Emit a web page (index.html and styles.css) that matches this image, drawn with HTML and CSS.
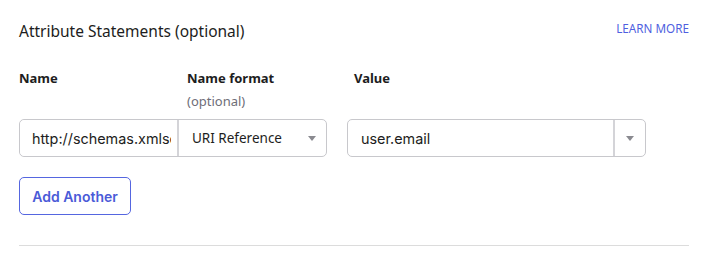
FILE: index.html
```html
<!DOCTYPE html>
<html lang="en">
<head>
  <meta charset="UTF-8">
  <title>Attribute Statements</title>
  <link rel="stylesheet" href="styles.css">
</head>
<body>
  <section class="attr-section">
    <!-- Заголовок секции -->
    <header class="attr-head">
      <h2 class="attr-title">Attribute Statements (optional)</h2>
      <a href="#" class="learn-more">LEARN MORE</a>
    </header>

    <!-- Подписи колонок -->
    <div class="attr-grid">
      <div class="col-label">Name</div>
      <div class="col-label">Name format<span class="col-hint">(optional)</span></div>
      <div class="col-label col-value">Value</div>

      <div class="name-group">
        <input class="name-input" type="text" value="http://schemas.xmlsoap.org/ws/2005/05/identity/claims/emailaddress">
        <div class="select-box">
          <span>URI Reference</span>
          <span class="caret"></span>
        </div>
      </div>

      <div class="value-box">
        <span class="value-text">user.email</span>
        <span class="value-toggle"><span class="caret"></span></span>
      </div>
    </div>

    <button class="add-btn" type="button">Add Another</button>

    <hr class="divider">
  </section>
</body>
</html>
```

FILE: styles.css
```css
/* Базовые сбросы */
* {
  margin: 0;
  padding: 0;
  box-sizing: border-box;
}

body {
  font-family: 'Noto Sans', 'Open Sans', sans-serif;
  color: #1d1d21;
  background: #fff;
  width: 713px;
}

.attr-section {
  padding: 18px 24px 0 19px;
}

/* Заголовок */
.attr-head {
  display: flex;
  justify-content: space-between;
  align-items: flex-start;
  height: 50px;
}

.attr-title {
  font-size: 15.5px;
  font-weight: 400;
  line-height: 26px;
}

.learn-more {
  font-size: 11.7px;
  color: #4f5fe0;
  text-decoration: none;
  line-height: 20px;
}

/* Сетка полей */
.attr-grid {
  display: grid;
  grid-template-columns: 168px 160px 299px;
}

.col-label {
  font-size: 13px;
  font-weight: 700;
  line-height: 20px;
  height: 51px;
}

.col-value {
  padding-left: 7px;
}

.col-hint {
  display: block;
  font-weight: 400;
  color: #6e6e78;
  margin-top: 3px;
}

.name-group {
  grid-column: 1 / 3;
  display: flex;
  width: 308px;
  height: 38px;
  border: 1px solid #c8c8cc;
  border-radius: 5px;
}

.name-input {
  width: 159px;
  border: none;
  border-right: 2px solid #d4d4d8;
  border-radius: 5px 0 0 5px;
  padding: 0 6px 0 12px;
  font-family: Inter, sans-serif;
  font-size: 14.4px;
  color: #1d1d21;
  outline: none;
}

.select-box {
  flex: 1;
  display: flex;
  align-items: center;
  justify-content: space-between;
  padding: 0 10px 0 13px;
  font-size: 13.5px;
}

.caret {
  width: 0;
  height: 0;
  border-left: 4px solid transparent;
  border-right: 4px solid transparent;
  border-top: 5px solid #8a8a90;
}

.value-box {
  display: flex;
  width: 299px;
  height: 38px;
  border: 1px solid #c8c8cc;
  border-radius: 5px;
}

.value-text {
  flex: 1;
  display: flex;
  align-items: center;
  padding-left: 13px;
  font-family: Inter, sans-serif;
  font-size: 14.4px;
  border-right: 2px solid #d4d4d8;
}

.value-toggle {
  width: 30px;
  display: flex;
  align-items: center;
  justify-content: center;
}

/* Кнопка */
.add-btn {
  display: block;
  margin-top: 20px;
  width: 112px;
  height: 38px;
  border: 1px solid #5566e0;
  border-radius: 5px;
  background: #fff;
  color: #4b5bd8;
  font-family: Inter, sans-serif;
  font-size: 14px;
  font-weight: 600;
}

.divider {
  margin-top: 30px;
  border: none;
  border-top: 1px solid #dcdcdc;
}
```
